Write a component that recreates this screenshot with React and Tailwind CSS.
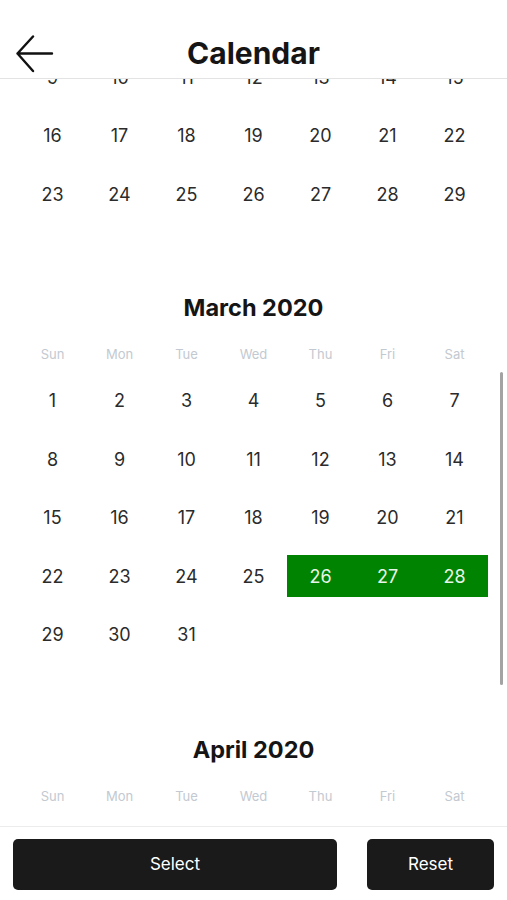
import React from "react";

const WEEKDAYS = ["Sun", "Mon", "Tue", "Wed", "Thu", "Fri", "Sat"];

function buildWeeks(firstDay, days) {
  const cells = [];
  for (let i = 0; i < firstDay; i++) cells.push(null);
  for (let d = 1; d <= days; d++) cells.push(d);
  const weeks = [];
  for (let i = 0; i < cells.length; i += 7) weeks.push(cells.slice(i, i + 7));
  return weeks;
}

function Week({ days, selected = [] }) {
  return (
    <div className="grid grid-cols-7 h-[58.5px] items-center">
      {days.map((d, i) => {
        const on = d && selected.includes(d);
        return (
          <div key={i} className="h-[42px] flex items-center justify-center">
            {d && (
              <span
                className={
                  on
                    ? "w-full h-full flex items-center justify-center bg-[#008300] text-[#e8f5e8]"
                    : "text-[#2b2b2b]"
                }
              >
                {d}
              </span>
            )}
          </div>
        );
      })}
    </div>
  );
}

function MonthHeader({ title, top }) {
  return (
    <>
      <h2 className={`${top} h-[28px] leading-[28px] text-center text-[23.5px] font-bold text-[#151515]`}>
        {title}
      </h2>
      <div className="mt-[16px] grid grid-cols-7 h-[34px] items-center text-[13px] text-[#c3c9d1]">
        {WEEKDAYS.map((w) => (
          <div key={w} className="text-center">
            {w}
          </div>
        ))}
      </div>
    </>
  );
}

export default function App() {
  const feb = buildWeeks(6, 29).slice(2);
  const march = buildWeeks(0, 31);

  return (
    <div
      className="h-[900px] w-[507px] flex flex-col bg-white"
      style={{ fontFamily: "Inter, 'Noto Sans', sans-serif" }}
    >
      <header className="relative h-[79px] shrink-0 border-b border-[#e3e3e3] bg-white z-10">
        <svg
          className="absolute left-[15px] top-[35px]"
          width="39"
          height="38"
          viewBox="0 0 39 38"
          fill="none"
          stroke="#111"
          strokeWidth="2.4"
          strokeLinecap="round"
          strokeLinejoin="round"
        >
          <path d="M37 18.5H2.5M18 1.5L2.5 18.5L18 36" />
        </svg>
        <h1 className="pt-[38px] text-center text-[30px] leading-[30px] font-bold text-[#151515]">
          Calendar
        </h1>
      </header>

      <main className="relative flex-1 overflow-hidden">
        <div className="-mt-[31px] px-[19px] text-[18px]">
          {feb.map((w, i) => (
            <Week key={"f" + i} days={w} />
          ))}
          <MonthHeader title="March 2020" top="mt-[70px]" />
          {march.map((w, i) => (
            <Week key={"m" + i} days={w} selected={[26, 27, 28]} />
          ))}
          <MonthHeader title="April 2020" top="mt-[72px]" />
          <Week days={[null, null, null, 1, 2, 3, 4]} />
        </div>
        <div className="absolute right-[4px] top-[293px] h-[313px] w-[3px] rounded-full bg-[#a3a3a3]" />
      </main>

      <footer className="shrink-0 border-t border-[#ececec] bg-white pt-[12px] pb-[10px] px-[13px] flex gap-[30px]">
        <button className="h-[51px] w-[324px] rounded-[5px] bg-[#1a1a1a] text-white text-[17px]">
          Select
        </button>
        <button className="h-[51px] flex-1 rounded-[5px] bg-[#1a1a1a] text-white text-[17px]">
          Reset
        </button>
      </footer>
    </div>
  );
}
